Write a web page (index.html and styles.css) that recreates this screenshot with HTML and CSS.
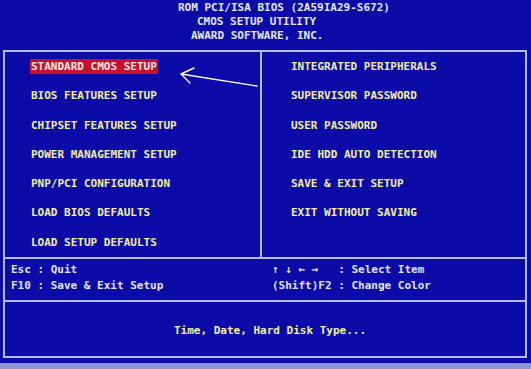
FILE: index.html
```html
<!DOCTYPE html>
<html>
<head>
<meta charset="utf-8">
<link rel="stylesheet" href="styles.css">
</head>
<body>
<div class="screen">
  <header class="header">
    <div class="hline">ROM PCI/ISA BIOS (2A59IA29-S672)</div>
    <div class="hline l2">CMOS SETUP UTILITY</div>
    <div class="hline l3">AWARD SOFTWARE, INC.</div>
  </header>
  <main class="frame">
    <section class="menu">
      <div class="col left">
        <div class="item"><span class="sel">STANDARD CMOS SETUP</span></div>
        <div class="item">BIOS FEATURES SETUP</div>
        <div class="item">CHIPSET FEATURES SETUP</div>
        <div class="item">POWER MANAGEMENT SETUP</div>
        <div class="item">PNP/PCI CONFIGURATION</div>
        <div class="item">LOAD BIOS DEFAULTS</div>
        <div class="item">LOAD SETUP DEFAULTS</div>
      </div>
      <div class="col right">
        <div class="item">INTEGRATED PERIPHERALS</div>
        <div class="item">SUPERVISOR PASSWORD</div>
        <div class="item">USER PASSWORD</div>
        <div class="item">IDE HDD AUTO DETECTION</div>
        <div class="item">SAVE &amp; EXIT SETUP</div>
        <div class="item">EXIT WITHOUT SAVING</div>
      </div>
      <svg class="pointer" width="90" height="30" viewBox="0 0 90 30">
        <path d="M3 8 L79 20 M3 8 L16 2 M3 8 L12 17" stroke="#ffffff" stroke-width="1.4" fill="none" stroke-linecap="round"/>
      </svg>
    </section>
    <section class="keys">
      <div class="kcol kleft">Esc : Quit
F10 : Save &amp; Exit Setup</div>
      <div class="kcol kright">↑ ↓ ← →   : Select Item
(Shift)F2 : Change Color</div>
    </section>
    <section class="desc">Time, Date, Hard Disk Type...</section>
  </main>
  <div class="strip"></div>
</div>
</body>
</html>
```
FILE: styles.css
```css
html, body {
  margin: 0;
  padding: 0;
  background: #0b0ba8;
}
.screen {
  width: 531px;
  height: 369px;
  overflow: hidden;
  background: #0b0ba8;
  font-family: "DejaVu Sans Mono", "Liberation Mono", monospace;
  font-weight: bold;
  font-size: 11px;
  display: flex;
  flex-direction: column;
}
.header {
  height: 50px;
  box-sizing: border-box;
  padding-top: 1px;
  padding-left: 178px;
  color: #e6e8fa;
}
.hline {
  line-height: 14px;
  white-space: pre;
}
.l2 { padding-left: 19px; }
.l3 { padding-left: 13px; }

.frame {
  margin-left: 3px;
  width: 524px;
  border: 2px solid #b4bcf2;
  box-sizing: border-box;
  display: flex;
  flex-direction: column;
}
.menu {
  position: relative;
  display: grid;
  grid-template-columns: 257px 1fr;
  height: 205px;
  border-bottom: 2px solid #b4bcf2;
}
.col {
  display: flex;
  flex-direction: column;
  color: #f2eea2;
}
.left {
  padding-left: 26px;
  border-right: 2px solid #b4bcf2;
}
.right {
  padding-left: 29px;
}
.item {
  height: 29.3px;
  line-height: 29.3px;
  white-space: pre;
}
.sel {
  display: inline-block;
  background: #c4122c;
  color: #fbe6ea;
  line-height: 15px;
  height: 15px;
  padding: 0 1px 0 1px;
  margin-left: -1px;
}
.pointer {
  position: absolute;
  left: 173px;
  top: 14px;
}

.keys {
  height: 43px;
  box-sizing: border-box;
  padding-top: 3px;
  display: grid;
  grid-template-columns: 265px 1fr;
  border-bottom: 2px solid #b4bcf2;
  color: #e4e4f4;
}
.kcol {
  white-space: pre;
  line-height: 16px;
}
.kleft { padding-left: 6px; }
.kright { padding-left: 2px; }

.desc {
  height: 54px;
  box-sizing: border-box;
  padding-top: 3px;
  display: flex;
  align-items: center;
  justify-content: center;
  padding-left: 10px;
  color: #f2eea2;
}
.strip {
  margin-top: 5px;
  height: 6px;
  background: #8c94d6;
}
```
